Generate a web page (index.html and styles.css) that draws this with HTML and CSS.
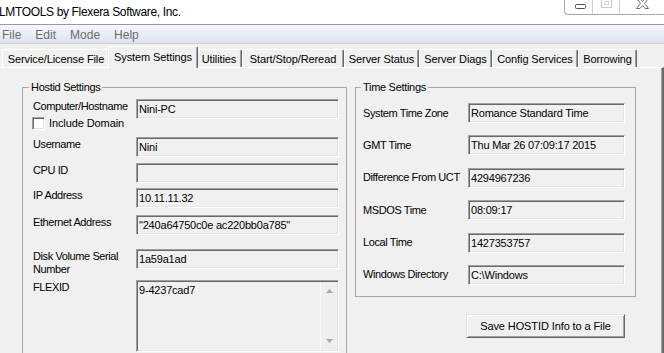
FILE: index.html
```html
<!DOCTYPE html>
<html>
<head>
<meta charset="utf-8">
<title>LMTOOLS</title>
<link rel="stylesheet" href="styles.css">
</head>
<body>
<div class="titlebar">
  <span class="title">LMTOOLS by Flexera Software, Inc.</span>
  <div class="controls">
    <span class="ctl ctl-min"><svg width="27" height="14" viewBox="0 0 27 14"><rect x="10.5" y="4.5" width="10" height="4" rx="1" fill="#fff" stroke="#4d4d4d"/></svg></span>
    <span class="ctl ctl-max"><svg width="26" height="14" viewBox="0 0 26 14"><rect x="8.5" y="-0.5" width="10" height="8" fill="none" stroke="#c9c9c9"/><rect x="11.5" y="1.5" width="4" height="3" fill="none" stroke="#d6d6d6"/></svg></span>
    <span class="ctl ctl-close"><svg width="44" height="14" viewBox="0 0 44 14"><polygon points="16.5,-1.5 20,-1.5 22.5,1.5 25,-1.5 28.5,-1.5 24.5,3.5 28.5,8.5 25,8.5 22.5,5.5 20,8.5 16.5,8.5 20.5,3.5" fill="#fff" stroke="#707070"/></svg></span>
  </div>
</div>
<div class="menubar">
  <span>File</span><span>Edit</span><span>Mode</span><span>Help</span>
</div>
<div class="tabs">
  <div class="tab t1">Service/License File</div>
  <div class="tab t2 active">System Settings</div>
  <div class="tab t3">Utilities</div>
  <div class="tab t4">Start/Stop/Reread</div>
  <div class="tab t5">Server Status</div>
  <div class="tab t6">Server Diags</div>
  <div class="tab t7">Config Services</div>
  <div class="tab t8">Borrowing</div>
</div>
<div class="panel">
  <fieldset class="group hostid">
    <legend>Hostid Settings</legend>
    <div class="hgrid">
      <span class="lbl">Computer/Hostname</span><div class="box">Nini-PC</div>
      <label class="check"><span class="cb"></span>Include Domain</label>
      <span class="lbl">Username</span><div class="box">Nini</div>
      <span class="lbl">CPU ID</span><div class="box"></div>
      <span class="lbl">IP Address</span><div class="box">10.11.11.32</div>
      <span class="lbl">Ethernet Address</span><div class="box">"240a64750c0e ac220bb0a785"</div>
      <span class="lbl">Disk Volume Serial<br>Number</span><div class="box">1a59a1ad</div>
      <span class="lbl">FLEXID</span>
      <div class="box multi">
        <div class="mtext">9-4237cad7</div>
        <div class="sb">
          <svg width="7" height="4" viewBox="0 0 7 4"><polygon points="3.5,0 7,4 0,4" fill="#a8a8a8"/></svg>
          <svg width="7" height="4" viewBox="0 0 7 4"><polygon points="0,0 7,0 3.5,4" fill="#a8a8a8"/></svg>
        </div>
      </div>
    </div>
  </fieldset>
  <div class="right">
    <fieldset class="group time">
      <legend>Time Settings</legend>
      <div class="tgrid">
        <span class="lbl">System Time Zone</span><div class="box">Romance Standard Time</div>
        <span class="lbl">GMT Time</span><div class="box">Thu Mar 26 07:09:17 2015</div>
        <span class="lbl">Difference From UCT</span><div class="box">4294967236</div>
        <span class="lbl">MSDOS Time</span><div class="box">08:09:17</div>
        <span class="lbl">Local Time</span><div class="box">1427353757</div>
        <span class="lbl">Windows Directory</span><div class="box">C:\Windows</div>
      </div>
    </fieldset>
    <button class="btn">Save HOSTID Info to a File</button>
  </div>
</div>
</body>
</html>
```
FILE: styles.css
```css
* { box-sizing: border-box; }
html, body { margin: 0; padding: 0; }
body {
  width: 664px;
  height: 353px;
  overflow: hidden;
  background: #f0f0f0;
  font-family: "Liberation Sans", Arial, sans-serif;
  font-size: 11px;
  color: #000;
}

/* title bar */
.titlebar {
  height: 25px;
  background: #fff;
  border-bottom: 1px solid #9a9a9a;
  display: flex;
  align-items: flex-start;
}
.title {
  flex: 1;
  font-size: 12px;
  letter-spacing: -0.35px;
  line-height: 14px;
  padding-top: 5px;
  margin-left: -1px;
  white-space: nowrap;
}
.controls {
  display: flex;
  height: 15px;
  background: #fff;
  border-left: 1px solid #a8a8a8;
  border-bottom: 1px solid #a8a8a8;
  border-bottom-left-radius: 4px;
}
.ctl { display: flex; height: 14px; }
.ctl-min { width: 28px; border-right: 1px solid #cfcfcf; }
.ctl-max { width: 27px; border-right: 1px solid #cfcfcf; }
.ctl-close { width: 44px; }

/* menu */
.menubar {
  height: 19px;
  display: flex;
  gap: 14px;
  padding: 2px 0 0 2px;
  font-size: 12px;
  line-height: 16px;
  color: #6d6d6d;
  background: linear-gradient(#f6f7fb, #dde3ef);
  border-bottom: 1px solid #c9cfdb;
}

/* tabs */
.tabs {
  height: 23px;
  display: flex;
  align-items: flex-end;
  padding-left: 2px;
}
.tab {
  height: 18px;
  padding-top: 1px;
  line-height: 16px;
  text-align: center;
  white-space: nowrap;
  letter-spacing: -0.1px;
  border-top: 1px solid #fff;
  border-left: 1px solid #fff;
  border-right: 1px solid #696969;
  box-shadow: inset -1px 0 0 #a0a0a0;
  border-top-left-radius: 2px;
  border-top-right-radius: 2px;
  background: #f0f0f0;
}
.tab.active {
  height: 22px;
  padding-top: 2px;
  margin: 0 -2px -1px -2px;
  position: relative;
  z-index: 1;
}
.t1 { width: 108px; }
.t2 { width: 90px; }
.t3 { width: 46px; }
.t4 { width: 102px; }
.t5 { width: 75px; }
.t6 { width: 73px; }
.t7 { width: 86px; }
.t8 { width: 59px; }

/* panel */
.panel {
  height: 286px;
  overflow: hidden;
  display: flex;
  align-items: flex-start;
  gap: 8px;
  padding: 13px 0 0 22px;
  border-top: 1px solid #fff;
  border-right: 2px solid #696969;
  box-shadow: inset -1px 0 0 #a0a0a0;
}

.group {
  margin: 0;
  min-width: 0;
  border: 1px solid #a5a5a5;
}
.group legend {
  padding: 0 2px;
  line-height: 13px;
  letter-spacing: -0.3px;
}
.hostid {
  width: 325px;
  padding: 5px 0 30px 10px;
}
.hostid legend { margin-left: -4px; }
.time {
  width: 281px;
  padding: 9px 10px 11px 7px;
}
.time legend { margin-left: -2px; }

.lbl {
  line-height: 13px;
  letter-spacing: -0.4px;
  white-space: nowrap;
}

.hgrid {
  display: grid;
  grid-template-columns: 103px 203px;
  grid-template-rows: 18px 20px 26px 25px 27px 34px 31px 72px;
  align-items: start;
}
.hgrid .lbl { padding-top: 1px; }

.check {
  grid-column: 1 / -1;
  display: flex;
  align-items: center;
  gap: 4px;
  margin-left: -1px;
  line-height: 13px;
  letter-spacing: -0.1px;
}
.cb {
  width: 13px;
  height: 13px;
  background: #fff;
  border: 1px solid;
  border-color: #a0a0a0 #fff #fff #a0a0a0;
  box-shadow: inset 1px 1px 0 #696969, inset -1px -1px 0 #e3e3e3;
}

.box {
  height: 20px;
  padding-left: 2px;
  line-height: 18px;
  letter-spacing: -0.2px;
  white-space: nowrap;
  overflow: hidden;
  background: #f0f0f0;
  border: 1px solid;
  border-color: #a0a0a0 #fff #fff #a0a0a0;
  box-shadow: inset 1px 1px 0 #696969, inset -1px -1px 0 #e3e3e3;
}
.box.multi {
  height: 72px;
  display: flex;
  padding: 1px;
}
.mtext {
  flex: 1;
  padding: 2px 0 0 1px;
  line-height: 13px;
}
.sb {
  width: 17px;
  display: flex;
  flex-direction: column;
  justify-content: space-between;
  align-items: center;
  padding: 7px 0;
  background: #efefef;
  border-left: 1px solid #f9f9f9;
}

.tgrid {
  display: grid;
  grid-template-columns: 105px 157px;
  grid-auto-rows: 20px;
  row-gap: 12.4px;
  align-items: center;
}

.right {
  display: flex;
  flex-direction: column;
}
.btn {
  align-self: flex-end;
  width: 159px;
  height: 24px;
  margin: 17px 11px 0 0;
  padding: 0;
  font-family: "Liberation Sans", Arial, sans-serif;
  font-size: 11px;
  letter-spacing: -0.1px;
  color: #000;
  background: #f0f0f0;
  border: 1px solid;
  border-color: #e3e3e3 #696969 #696969 #e3e3e3;
  box-shadow: inset 1px 1px 0 #fff, inset -1px -1px 0 #a0a0a0;
}
```
